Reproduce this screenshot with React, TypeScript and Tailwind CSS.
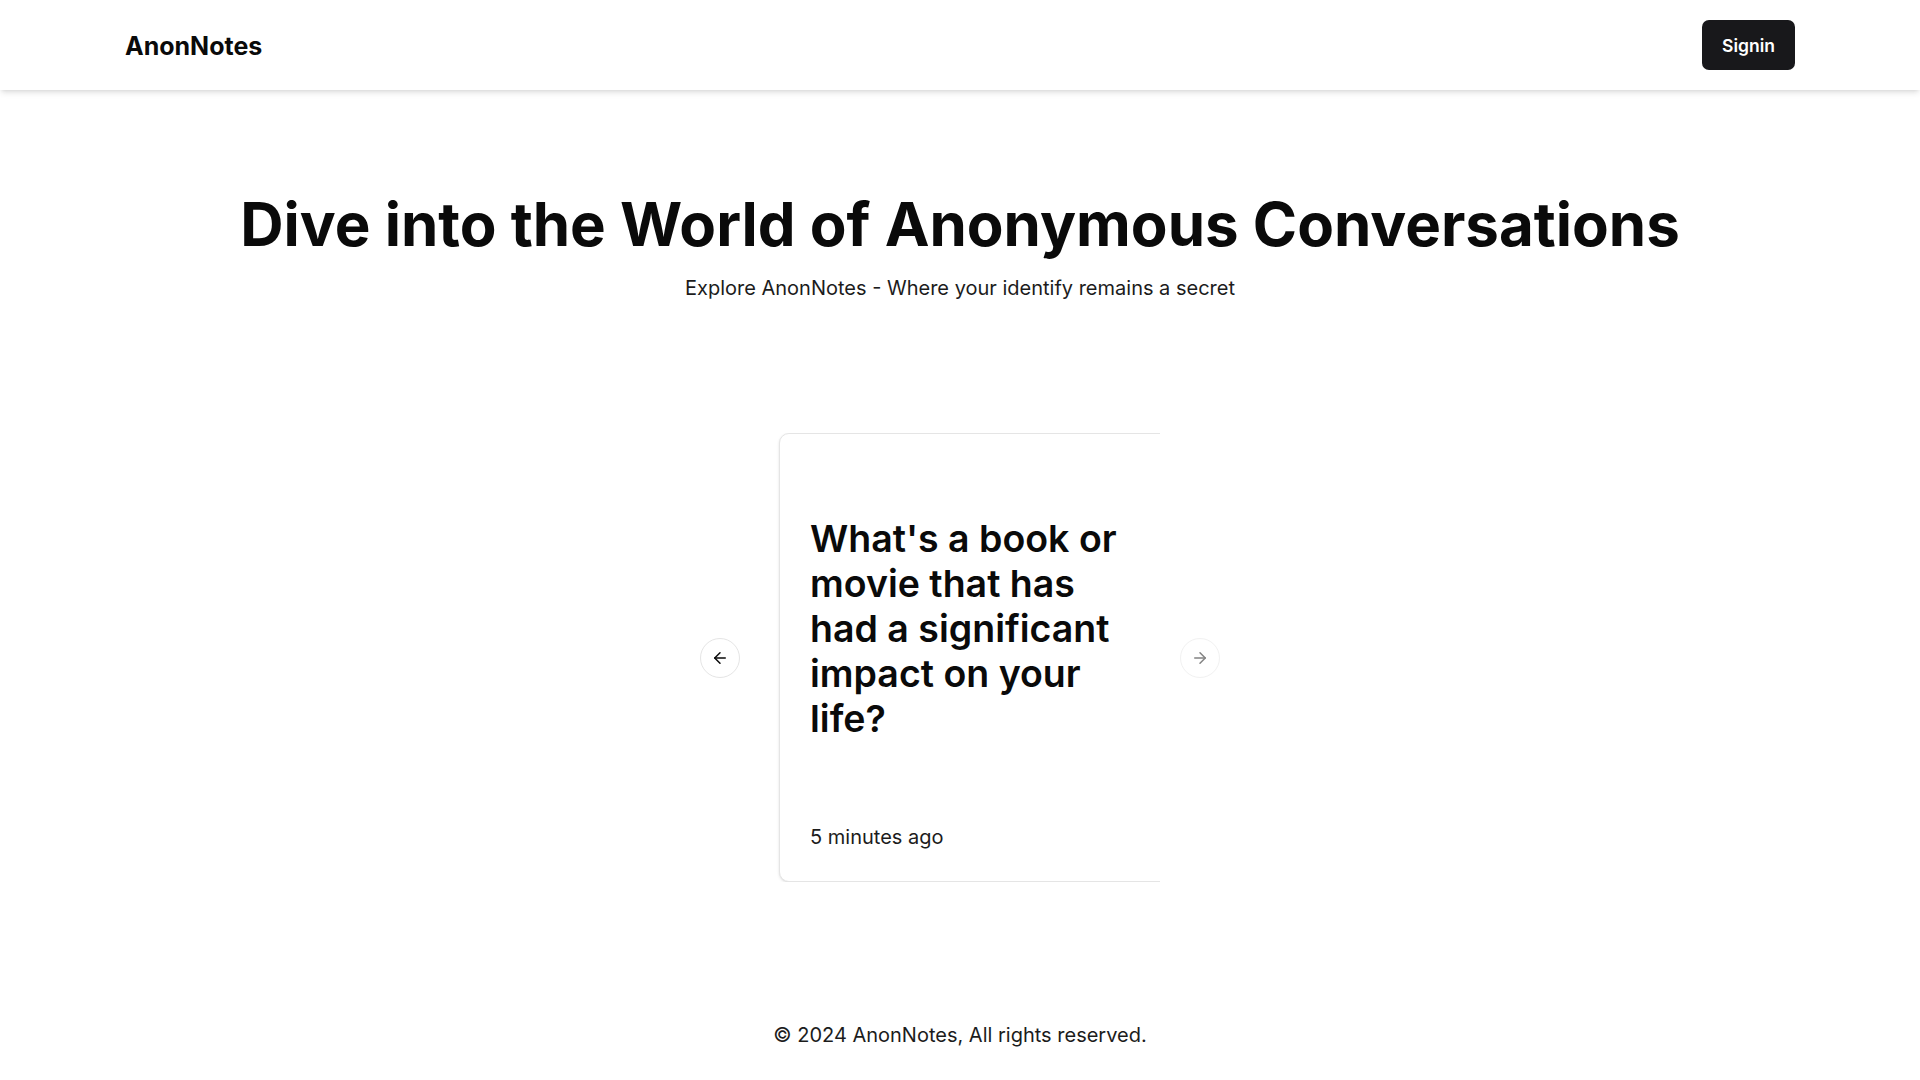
import React from 'react';
import { ArrowLeft, ArrowRight } from 'lucide-react';

const messages = [
  {
    title: "What's a book or movie that has had a significant impact on your life?",
    received: '5 minutes ago',
  },
];

export default function App() {
  return (
    <div className="min-h-screen flex flex-col bg-white text-[#0a0a0a]" style={{ fontFamily: 'Inter, "Noto Sans", sans-serif' }}>
      {/* Navbar */}
      <nav className="h-[90px] shrink-0 bg-white shadow-md flex items-center justify-between px-[125px]">
        <a href="#" className="text-[25px] leading-[32px] font-bold text-[#0a0a0a] pt-[1px]">AnonNotes</a>
        <button className="h-[50px] px-5 rounded-[7px] bg-[#18181b] text-white text-[17.5px] font-semibold pt-[2px]">
          Signin
        </button>
      </nav>

      {/* Hero */}
      <main className="flex-1 flex flex-col items-center pt-[104px]">
        <h1 className="text-[60px] leading-none font-bold text-center text-[#0a0a0a]">
          Dive into the World of Anonymous Conversations
        </h1>
        <p className="mt-[19px] text-[20px] leading-[30px] text-[#1c1c1c]">
          Explore AnonNotes - Where your identify remains a secret
        </p>

        {/* Carousel */}
        <div className="relative mt-[130px] w-[400px]">
          <div className="overflow-hidden">
            <div className="flex">
              {messages.map((m, i) => (
                <div key={i} className="shrink-0 pl-[19px]">
                  <div className="w-[400px] h-[449px] rounded-[10px] border border-[#e5e5e5] bg-white shadow-sm px-[30px] pt-[82px] flex flex-col">
                    <h3 className="text-[37.5px] leading-[45px] font-semibold text-[#0a0a0a]">
                      {m.title}
                    </h3>
                    <p className="mt-[82px] text-[20px] leading-[28px] text-[#1c1c1c]">{m.received}</p>
                  </div>
                </div>
              ))}
            </div>
          </div>
          <button className="absolute -left-[60px] top-1/2 -translate-y-1/2 w-10 h-10 rounded-full border border-[#e5e5e5] bg-white flex items-center justify-center">
            <ArrowLeft size={18} strokeWidth={2} />
          </button>
          <button className="absolute -right-[60px] top-1/2 -translate-y-1/2 w-10 h-10 rounded-full border border-[#e5e5e5] bg-white flex items-center justify-center opacity-50">
            <ArrowRight size={18} strokeWidth={2} />
          </button>
        </div>
      </main>

      {/* Footer */}
      <footer className="text-center pb-[31px] pt-6 text-[20px] leading-[28px] text-[#1c1c1c]">
        © 2024 AnonNotes, All rights reserved.
      </footer>
    </div>
  );
}
